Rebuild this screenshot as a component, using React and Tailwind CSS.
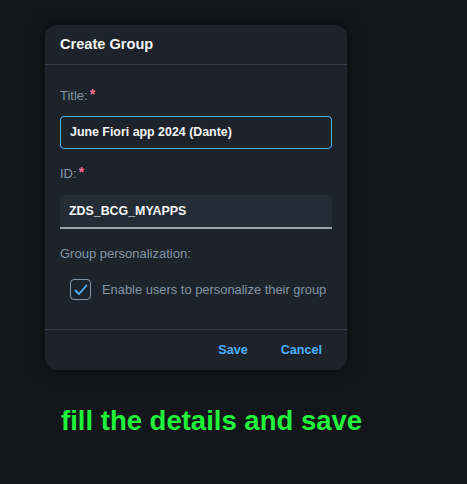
export default function App() {
  return (
    <div className="w-[467px] h-[484px] bg-[#12161b] pt-[25px] pl-[45px]" style={{ fontFamily: '"Liberation Sans", Arial, sans-serif' }}>
      <div className="w-[302px] h-[345px] bg-[#1d232a] rounded-[12px] shadow-[0_0_16px_rgba(0,0,0,0.5)] flex flex-col">
        <div className="h-[40px] border-b border-[#353c45] flex items-center px-[15px] pt-[1px]">
          <span className="text-[14.6px] font-bold text-[#f5f6f7]">Create Group</span>
        </div>
        <div className="flex-1 px-[15px] pt-[22px]">
          <div className="text-[13px] text-[#8396a8] leading-[18px] flex items-start">Title:<span className="text-[#fa6d97] font-bold ml-[2px] text-[14px] leading-[14px]">*</span></div>
          <div className="mt-[11px] h-[33px] w-[272px] border border-[#4db1ff] rounded-[4px] bg-[#1d232a] flex items-center px-[9px]">
            <span className="text-[12.4px] font-bold text-[#f5f6f7]">June Fiori app 2024 (Dante)</span>
          </div>
          <div className="mt-[16px] text-[13px] text-[#8396a8] leading-[18px] flex items-start">ID:<span className="text-[#fa6d97] font-bold ml-[2px] text-[14px] leading-[14px]">*</span></div>
          <div className="mt-[12px] h-[34px] w-[272px] bg-[#242c36] rounded-t-[4px] border-b-[2px] border-[#9aa4ad] flex items-center px-[9px]">
            <span className="text-[12.4px] font-bold text-[#f5f6f7]">ZDS_BCG_MYAPPS</span>
          </div>
          <div className="mt-[16px] text-[13px] text-[#8396a8] leading-[18px]">Group personalization:</div>
          <div className="mt-[16px] flex items-center pl-[10px]">
            <div className="w-[21px] h-[21px] border border-[#8396a8] rounded-[4px] flex items-center justify-center">
              <svg width="14" height="12" viewBox="0 0 14 12" fill="none">
                <path d="M1.5 6.5 L5 10 L12.5 1.5" stroke="#4db1ff" strokeWidth="1.8" strokeLinecap="round" strokeLinejoin="round" />
              </svg>
            </div>
            <span className="ml-[11px] text-[12.9px] text-[#8396a8] whitespace-nowrap">Enable users to personalize their group</span>
          </div>
        </div>
        <div className="h-[41px] border-t border-[#353c45] flex items-center justify-end pr-[25px] gap-[33px]">
          <span className="text-[12.6px] font-bold text-[#4db1ff]">Save</span>
          <span className="text-[12.6px] font-bold text-[#4db1ff]">Cancel</span>
        </div>
      </div>
      <div className="mt-[36px] ml-[16px] text-[27.5px] font-bold text-[#1ff33a] leading-[30px]">fill the details and save</div>
    </div>
  );
}
